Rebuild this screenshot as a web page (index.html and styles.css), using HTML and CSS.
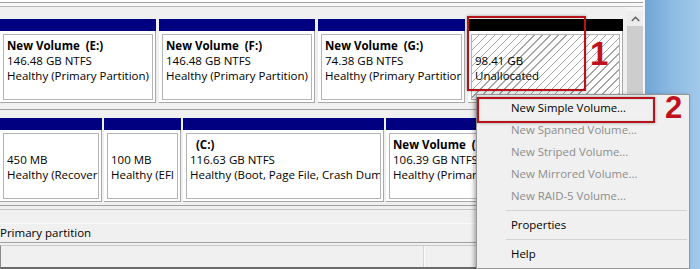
FILE: index.html
```
<!DOCTYPE html>
<html>
<head>
<meta charset="utf-8">
<link rel="stylesheet" href="styles.css">
</head>
<body>
<div class="desk">
  <div class="win">
    <div class="toppane"></div>
    <div class="splitter"></div>
    <div class="pane">
      <div class="view">
        <div class="disks">
          <div class="disk row1">
            <div class="part w-e"><div class="hdr"></div><div class="body"><div class="inner"><b>New Volume  (E:)</b><br>146.48 GB NTFS<br>Healthy (Primary Partition)</div></div></div>
            <div class="part w-f"><div class="hdr"></div><div class="body"><div class="inner"><b>New Volume  (F:)</b><br>146.48 GB NTFS<br>Healthy (Primary Partition)</div></div></div>
            <div class="part w-g"><div class="hdr"></div><div class="body"><div class="inner"><b>New Volume  (G:)</b><br>74.38 GB NTFS<br>Healthy (Primary Partition)</div></div></div>
            <div class="part w-u"><div class="hdr black"></div><div class="body"><div class="inner hatch"> <br>98.41 GB<br>Unallocated</div></div></div>
          </div>
          <div class="disk-sep"></div>
          <div class="disk row2">
            <div class="part w-p1"><div class="hdr"></div><div class="body"><div class="inner"> <br>450 MB<br>Healthy (Recover</div></div></div>
            <div class="part w-p2"><div class="hdr"></div><div class="body"><div class="inner"> <br>100 MB<br>Healthy (EFI</div></div></div>
            <div class="part w-p3"><div class="hdr"></div><div class="body"><div class="inner"><b>  (C:)</b><br>116.63 GB NTFS<br>Healthy (Boot, Page File, Crash Dum</div></div></div>
            <div class="part w-p4"><div class="hdr"></div><div class="body"><div class="inner"><b>New Volume  (</b><br>106.39 GB NTFS<br>Healthy (Primar</div></div></div>
          </div>
        </div>
        <div class="scroll">
          <div class="sb-btn">
            <svg width="9" height="6" viewBox="0 0 9 6"><polyline points="0.8,5 4.5,1.3 8.2,5" fill="none" stroke="#606060" stroke-width="1.5"/></svg>
          </div>
          <div class="sb-thumb"></div>
        </div>
      </div>
      <div class="legend">
        <div class="legend-line"></div>
        <div class="legend-gap"></div>
        <div class="legend-row">Primary partition</div>
      </div>
      <div class="status">
        <div class="status-main"></div>
        <div class="status-side"></div>
      </div>
    </div>
  </div>
  <div class="bg"></div>

  <div class="menu">
    <div class="item">New Simple Volume...</div>
    <div class="item off">New Spanned Volume...</div>
    <div class="item off">New Striped Volume...</div>
    <div class="item off">New Mirrored Volume...</div>
    <div class="item off">New RAID-5 Volume...</div>
    <div class="sep"></div>
    <div class="item">Properties</div>
    <div class="sep"></div>
    <div class="item">Help</div>
  </div>

  <div class="mark mark1"></div>
  <div class="num num1">1</div>
  <div class="mark mark2"></div>
  <div class="num num2">2</div>
</div>
</body>
</html>
```
FILE: styles.css
```
* { box-sizing: border-box; }
html, body { margin: 0; padding: 0; }
body {
  width: 700px;
  height: 269px;
  overflow: hidden;
  font-family: "Open Sans", "Noto Sans", sans-serif;
  font-size: 11.5px;
  color: #000;
}
.desk {
  position: relative;
  display: flex;
  width: 700px;
  height: 269px;
}
.win {
  width: 645px;
  height: 269px;
  display: flex;
  flex-direction: column;
  background: #f0f0f0;
  border-right: 2px solid #f6f6f6;
}
.bg {
  flex: 1;
  background: linear-gradient(90deg, #6fa5d5 0%, #8dbbe3 50%, #a2c9ea 100%);
}
.toppane {
  height: 3px;
  background: #fff;
  border-bottom: 1px solid #a0a0a0;
}
.splitter {
  height: 3px;
  background: #f7f7f7;
}
.pane {
  flex: 1;
  display: flex;
  flex-direction: column;
  border-top: 1px solid #b9b9b9;
}
.view {
  display: flex;
  height: 198px;
}
.disks {
  width: 627px;
  padding-top: 12px;
  background: #f0f0f0;
  overflow: hidden;
}
.disk {
  display: flex;
  height: 84px;
}
.row1 { gap: 3px; }
.row2 { gap: 2px; }
.part {
  flex: none;
  display: flex;
  flex-direction: column;
}
.w-e { width: 156px; }
.w-f { width: 156px; }
.w-g { width: 147px; }
.w-u { width: 155px; }
.w-p1 { width: 102px; }
.w-p2 { width: 77px; }
.w-p3 { width: 201px; }
.w-p4 { width: 230px; }
.hdr {
  height: 12px;
  background: #000080;
}
.hdr.black { background: #000; }
.body {
  flex: 1;
  background: #fff;
  padding: 3px 2px 2px 3px;
  border-right: 1px solid #a8a8a8;
  border-bottom: 1px solid #a8a8a8;
  min-height: 0;
}
.inner {
  height: 100%;
  border: 1px solid #b4b4b4;
  padding: 3px 0 0 3px;
  line-height: 15px;
  white-space: pre;
  overflow: hidden;
}
.inner b { font-weight: 700; }
.hatch {
  background: repeating-linear-gradient(135deg, #fff 0px, #fff 4.6px, #a4a4a4 4.6px, #a4a4a4 5.6px);
}
.disk-sep {
  height: 15px;
  background: linear-gradient(#f0f0f0 0, #f0f0f0 6px, #a0a0a0 6px, #a0a0a0 7px, #f0f0f0 7px);
}
.scroll {
  width: 16px;
  padding-top: 4px;
  display: flex;
  flex-direction: column;
  background: #f4f4f4;
}
.sb-btn {
  height: 15px;
  display: flex;
  align-items: center;
  justify-content: center;
  background: #ececec;
}
.sb-thumb {
  flex: 1;
  background: #cdcdcd;
}
.legend {
  height: 38px;
  border-top: 1px solid #a0a0a0;
  border-bottom: 1px solid #a0a0a0;
  padding-top: 3px;
  display: flex;
  flex-direction: column;
}
.legend-line {
  height: 1px;
  background: #c4c4c4;
}
.legend-gap {
  height: 14px;
  border-bottom: 1px solid #fbfbfb;
}
.legend-row {
  height: 18px;
  line-height: 18px;
  padding-left: 0;
  white-space: nowrap;
}
.status {
  margin-top: 2px;
  flex: 1;
  display: flex;
  border-top: 1px solid #c8c8c8;
  border-bottom: 2px solid #6a6a6a;
  border-left: 1px solid #8a8a8a;
}
.status-main {
  width: 423px;
  border-right: 1px solid #d6d6d6;
}
.status-side { flex: 1; border-left: 1px solid #fafafa; }

.menu {
  position: absolute;
  left: 476px;
  top: 94px;
  width: 214px;
  height: 175px;
  padding: 2px;
  background: #f0f0f0;
  border: 1px solid #979797;
  box-shadow: -2px 1px 4px rgba(0, 0, 0, 0.3);
  font-size: 11.4px;
}
.item {
  height: 22px;
  line-height: 22px;
  padding-left: 32px;
  white-space: nowrap;
}
.item.off { color: #8d8d8d; }
.sep {
  height: 7px;
  margin-left: 27px;
  background: linear-gradient(transparent 0, transparent 3px, #d3d3d3 3px, #d3d3d3 4px, transparent 4px);
}
.mark {
  position: absolute;
  border: 2px solid #b8121b;
  box-shadow: 0 0 3px rgba(0, 0, 0, 0.35), inset 0 0 2px rgba(0, 0, 0, 0.2);
}
.mark1 { left: 467px; top: 16px; width: 119px; height: 75px; }
.mark2 { left: 477px; top: 97px; width: 178px; height: 26px; }
.num {
  position: absolute;
  font-family: "Liberation Sans", Arial, sans-serif;
  font-weight: 700;
  color: #c0121c;
  line-height: 1;
}
.num1 { left: 590px; top: 37px; font-size: 33px; }
.num2 { left: 665px; top: 92px; font-size: 31px; }
```
